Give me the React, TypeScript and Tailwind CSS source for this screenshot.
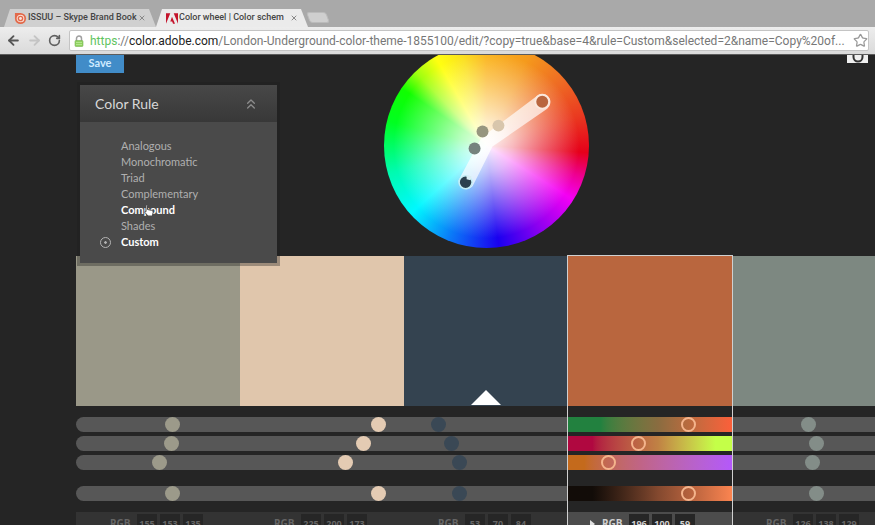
import type { ReactNode } from 'react';
import { ArrowLeft, ArrowRight, ChevronsUp, RotateCw, Star, X } from 'lucide-react';

const wheelClass =
  'bg-[radial-gradient(circle,rgba(255,255,255,0.95)_0%,rgba(255,255,255,0.72)_18%,rgba(255,255,255,0.4)_38%,rgba(255,255,255,0)_64%),conic-gradient(#fbb41c_0deg,#f59a1c_25deg,#ee6a24_50deg,#ea3a20_72deg,#e6001a_94deg,#ee0090_108deg,#f400f4_122deg,#8a00f0_148deg,#1a00f0_173deg,#0a7cf8_202deg,#00f8ff_228deg,#00fbb0_254deg,#00ff20_284deg,#10ff00_304deg,#a0ff10_316deg,#ffff10_330deg,#fbe01c_345deg,#fbb41c_360deg)]';

const rules = [
  'Analogous',
  'Monochromatic',
  'Triad',
  'Complementary',
  'Compound',
  'Shades',
  'Custom',
];

const swatches = [
  { name: 'Color 1', fill: 'bg-[#9a9888]', thumb: 'text-[#9c9a8a]', values: [60, 59, 51, 60], rgb: [155, 153, 135] },
  { name: 'Color 2', fill: 'bg-[#e0c6ac]', thumb: 'text-[#e4cbb3]', values: [88, 78, 66, 88], rgb: [225, 200, 173] },
  { name: 'Color 3', fill: 'bg-[#344350]', thumb: 'text-[#3a4855]', values: [18, 27, 32, 32], rgb: [53, 70, 84] },
  { name: 'Color 4', fill: 'bg-[#b9663e]', thumb: 'text-transparent', values: [76, 42, 22, 76], rgb: [196, 100, 59] },
  { name: 'Color 5', fill: 'bg-[#7d8881]', thumb: 'text-[#838d88]', values: [46, 52, 49, 52], rgb: [126, 138, 129] },
];

const channels = ['Red', 'Green', 'Blue', 'Brightness'];

const gradients = [
  'bg-linear-to-r from-[#22813f] from-20% via-[#8a6c40] via-55% to-[#fb5f3a]',
  'bg-linear-to-r from-[#b00840] from-15% via-[#c08244] via-55% to-[#c4ff48] to-90%',
  'bg-linear-to-r from-[#c46a1c] from-10% via-[#c06488] via-45% to-[#b458fa]',
  'bg-linear-to-r from-[#120c08] from-15% via-[#84492f] via-55% to-[#fb8450]',
];

function BrowserTab({ title, active, children }: { title: string; active?: boolean; children: ReactNode }) {
  return (
    <div
      className={`flex h-[18px] w-[152px] items-center px-2.5 [clip-path:polygon(6px_0,calc(100%-7px)_0,100%_100%,0_100%)] ${
        active ? 'bg-[#ebebeb]' : 'bg-[#d0d0d0]'
      }`}
    >
      {children}
      <span className="flex-1 whitespace-nowrap font-['Roboto',sans-serif] text-[9px] font-medium text-[#444]">
        {title}
      </span>
      <button aria-label={`Close ${title}`} className="text-[#888]">
        <X size={8} strokeWidth={3} />
      </button>
    </div>
  );
}

function BrowserChrome() {
  return (
    <header className="bg-[#a9a9a9] pt-[9px]">
      <div className="flex items-end pl-1">
        <BrowserTab title="ISSUU – Skype Brand Book">
          <svg viewBox="0 0 14 14" className="mr-px size-[13px] shrink-0" aria-hidden="true">
            <path d="M1 1h6a6 6 0 1 1-6 6z" fill="#e2694a" />
            <circle cx="7" cy="7" r="3.6" fill="none" stroke="#fbe3da" strokeWidth="1.1" />
            <circle cx="7" cy="7" r="1.5" fill="#fbe3da" />
          </svg>
        </BrowserTab>
        <BrowserTab title="Color wheel | Color schem" active>
          <svg viewBox="0 0 14 12" className="mr-px h-[11px] w-3 shrink-0" aria-hidden="true">
            <path d="M0 0h5L0 12zM9 0h5v12zM7 4l3.5 8H8.200l-1-2.500H5z" fill="#c4142c" />
          </svg>
        </BrowserTab>
        <button
          aria-label="New tab"
          className="mb-1 h-[11px] w-5 skew-x-[20deg] rounded-[3px] border border-[#bbb] bg-[#cfcfcf]"
        />
      </div>
      <div className="flex h-[27px] items-center bg-linear-to-b from-[#ededed] to-[#dadada] px-1.5">
        <button aria-label="Back" className="text-[#555]">
          <ArrowLeft size={15} strokeWidth={3} />
        </button>
        <button aria-label="Forward" className="ml-1.5 text-[#c4c4c4]">
          <ArrowRight size={15} strokeWidth={3} />
        </button>
        <button aria-label="Reload" className="ml-1.5 text-[#606060]">
          <RotateCw size={13} strokeWidth={3} />
        </button>
        <div className="ml-2 flex h-[21px] flex-1 items-center rounded-xs border border-[#c4c4c4] bg-white pl-1 font-['Roboto',sans-serif] text-xs">
          <svg viewBox="0 0 10 12" className="mr-1.5 h-3 w-2.5 shrink-0" aria-hidden="true">
            <path d="M2.500 6V3.500a2.500 2.500 0 0 1 5 0V6" fill="none" stroke="#a0a0a0" strokeWidth="1.5" />
            <rect x="1" y="5.500" width="8" height="6" rx="1" fill="#8fd35f" stroke="#79b457" strokeWidth="0.600" />
            <path d="M2 7.500h6M2 9.500h6" stroke="#c3eca5" strokeWidth="0.700" />
          </svg>
          <label htmlFor="address" className="whitespace-nowrap text-[#777]">
            <span className="text-[#5fc45f]">https</span>://<span className="text-[#222]">color.adobe.com</span>
          </label>
          <input
            id="address"
            className="min-w-0 flex-1 text-[#777] outline-none"
            defaultValue="/London-Underground-color-theme-1855100/edit/?copy=true&base=4&rule=Custom&selected=2&name=Copy%20of..."
          />
          <button aria-label="Bookmark" className="text-[#999]">
            <Star size={15} strokeWidth={2} />
          </button>
        </div>
      </div>
    </header>
  );
}

function ColorRule() {
  return (
    <aside className="absolute left-1 top-[30px] z-20 w-[197px] bg-[#4a4a4a] font-['Lato',sans-serif] shadow-[0_0_0_3px_rgba(30,30,30,0.35)]">
      <div className="flex h-[37px] items-center justify-between bg-linear-to-b from-[#484848] to-[#383838] pl-[15px] pr-[18px]">
        <h2 className="text-sm text-[#d8d8d8]">Color Rule</h2>
        <button aria-label="Collapse" className="text-[#8c8c8c]">
          <ChevronsUp size={16} strokeWidth={2} />
        </button>
      </div>
      <div className="pb-[13px] pl-5 pt-4">
        {rules.map((rule) => (
          <label
            key={rule}
            className={`flex h-4 items-center gap-2.5 text-[11px] ${
              rule === 'Custom' || rule === 'Compound' ? 'font-bold text-white' : 'text-[#b0b0b0]'
            }`}
          >
            <input
              type="radio"
              name="rule"
              defaultChecked={rule === 'Custom'}
              className="size-[11px] appearance-none rounded-full checked:border checked:border-[#b4b4b4] checked:bg-radial checked:from-[#b4b4b4] checked:from-15% checked:to-transparent checked:to-25%"
            />
            {rule}
          </label>
        ))}
      </div>
      <svg viewBox="0 0 12 14" className="absolute left-[63px] top-[119px] h-3.5 w-3" aria-hidden="true">
        <path
          d="M3 1.500c0-.8 1.500-.8 1.500 0v4l4 .8c1.200.3 1.800 1 1.600 2.200l-.7 3.500H5L2 8.500c-.6-.9.300-1.500 1-.8z"
          fill="#fff"
          stroke="#4a4a4a"
          strokeWidth="1"
        />
      </svg>
    </aside>
  );
}

function ColorWheel() {
  return (
    <div className={`relative -mt-3 size-[205px] rounded-full ${wheelClass}`}>
      <svg viewBox="0 0 206 206" className="absolute inset-0 size-full" role="img" aria-label="Color wheel">
        <defs>
          <radialGradient id="beam" gradientUnits="userSpaceOnUse" cx="103" cy="103" r="74">
            <stop offset="0" stopColor="#fff" stopOpacity="0.9" />
            <stop offset="0.4" stopColor="#fff" stopOpacity="0.65" />
            <stop offset="1" stopColor="#fff" stopOpacity="0.7" />
          </radialGradient>
        </defs>
        <path d="M98 95 154 53a8 8 0 0 1 10 13L109 104 89 144a8 8 0 0 1-14-6z" fill="url(#beam)" />
        <circle cx="115" cy="83" r="6" fill="#d8c6ac" />
        <circle cx="99" cy="89" r="6" fill="#97967f" />
        <circle cx="91" cy="106" r="6" fill="#75837e" />
        <circle cx="159" cy="59" r="7" fill="#b9663e" stroke="#fbe8dc" strokeWidth="2" />
        <circle cx="82" cy="140" r="6.500" fill="#2c414e" stroke="#c4eef6" strokeWidth="1.500" />
        <path d="M83 137v-4l5 1-1 4z" fill="#d8eef4" />
      </svg>
    </div>
  );
}

function SwatchColumn({ swatch, index }: { swatch: (typeof swatches)[number]; index: number }) {
  const selected = index === 3;
  return (
    <section className={selected ? 'relative z-10 ring-1 ring-[#d0d0d0]' : ''}>
      <div className={`flex h-[150px] items-end justify-center ${swatch.fill}`}>
        {index === 2 && (
          <svg viewBox="0 0 30 15" className="mb-px h-[15px] w-[30px]" aria-hidden="true">
            <path d="M15 0 30 15H0z" fill="#fff" />
          </svg>
        )}
      </div>
      <div className="flex flex-col gap-1 pt-[11px]">
        {swatch.values.map((value, i) => (
          <input
            key={channels[i]}
            type="range"
            aria-label={`${swatch.name} ${channels[i]}`}
            defaultValue={value}
            className={`h-[15px] w-full appearance-none last:mt-3 [&::-webkit-slider-thumb]:size-[15px] [&::-webkit-slider-thumb]:appearance-none [&::-webkit-slider-thumb]:rounded-full [&::-webkit-slider-thumb]:bg-current ${swatch.thumb} ${
              selected
                ? `${gradients[i]} [&::-webkit-slider-thumb]:border-2 [&::-webkit-slider-thumb]:border-[#f4b48c]`
                : 'bg-[#575757]'
            } ${index === 0 ? 'rounded-l-full' : ''}`}
          />
        ))}
      </div>
      <div
        className={`relative mt-[11px] flex h-10 items-start gap-[3px] pl-[34px] pt-0.5 font-['Open_Sans',sans-serif] ${
          selected ? 'bg-[#4c4c4c] text-[#d0d0d0]' : 'bg-[#333] text-[#666]'
        }`}
      >
        {selected && (
          <svg viewBox="0 0 5 8" className="absolute left-[22px] top-2 h-2 w-[5px]" aria-hidden="true">
            <path d="M0 0 5 4 0 8z" fill="#e0e0e0" />
          </svg>
        )}
        <span className="w-6 pt-0.5 text-[10px] font-bold">RGB</span>
        {swatch.rgb.map((value, i) => (
          <input
            key={channels[i]}
            aria-label={`${swatch.name} ${channels[i]} value`}
            defaultValue={value}
            className="h-[18px] w-5 bg-[#262626] text-center text-[9px] font-bold"
          />
        ))}
      </div>
    </section>
  );
}

export default function App() {
  return (
    <div className="flex h-screen flex-col overflow-hidden bg-[#252525]">
      <BrowserChrome />
      <main className="relative min-h-0 flex-1 overflow-hidden border-t border-[#5c5c5c] pl-[76px]">
        <div className="relative flex h-[201px] min-w-[820px] justify-center">
          <button className="absolute left-0 top-0 h-[18px] w-12 bg-[#418cc8] pb-0.5 font-['Lato',sans-serif] text-[11px] font-bold text-[#cfeaff]">
            Save
          </button>
          <ColorRule />
          <ColorWheel />
        </div>
        <button
          aria-label="Create from image"
          className="absolute right-[7px] top-0 flex h-2 w-[21px] justify-center overflow-hidden bg-[#f0f0f0]"
        >
          <svg viewBox="0 0 12 8" className="h-2 w-3" aria-hidden="true">
            <path d="M1.500 0v2a4.500 4.500 0 0 0 9 0V0" fill="none" stroke="#333" strokeWidth="2" />
          </svg>
        </button>
        <div className="grid min-w-[820px] grid-cols-5">
          {swatches.map((swatch, index) => (
            <SwatchColumn key={swatch.name} swatch={swatch} index={index} />
          ))}
        </div>
      </main>
    </div>
  );
}
